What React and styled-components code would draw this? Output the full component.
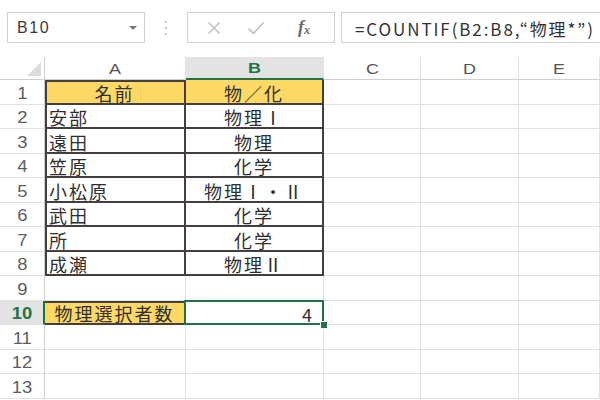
import React from "react";
import styled, { createGlobalStyle } from "styled-components";

const GREEN = "#217346";
const DARK = "#443f3c";
const GRID = "#e1e1e1";
const GOLD = "#ffd966";
const JP = `"Noto Sans CJK JP", "Noto Sans", sans-serif`;
const UI = `"Liberation Sans", Arial, sans-serif`;

const Global = createGlobalStyle`
  html, body {
    margin: 0;
    padding: 0;
    background: #fff;
    overflow: hidden;
  }
  * { box-sizing: border-box; }
`;

const Page = styled.div`
  width: 600px;
  height: 400px;
  overflow: hidden;
  background: #fff;
`;

/* ---------- formula bar ---------- */

const TopBar = styled.div`
  display: flex;
  align-items: flex-start;
  height: 57px;
  padding: 12px 0 0 7px;
`;

const NameBox = styled.div`
  display: flex;
  align-items: center;
  justify-content: space-between;
  width: 138px;
  height: 31px;
  border: 1px solid #cfcfcf;
  padding: 0 7px 0 9px;
  font-family: ${UI};
  font-size: 16px;
  letter-spacing: 1.6px;
  color: #3a3a3a;
`;

const Caret = styled.span`
  width: 0;
  height: 0;
  border-left: 4px solid transparent;
  border-right: 4px solid transparent;
  border-top: 4px solid #7a7a7a;
`;

const Dots = styled.div`
  display: flex;
  flex-direction: column;
  align-items: center;
  justify-content: center;
  gap: 4px;
  width: 42px;
  height: 31px;

  span {
    width: 2px;
    height: 2px;
    border-radius: 50%;
    background: #b5b5b5;
  }
`;

const FxBox = styled.div`
  display: flex;
  align-items: center;
  width: 148px;
  height: 31px;
  border: 1px solid #cfcfcf;
  padding: 0 0 0 17px;
`;

const IconSlot = styled.span`
  display: flex;
  align-items: center;
  justify-content: center;
  width: ${(p) => p.$w}px;
`;

const Fx = styled.span`
  font-family: "Liberation Serif", "Times New Roman", serif;
  font-style: italic;
  font-weight: bold;
  font-size: 18px;
  color: #6b6b6b;

  sub {
    font-size: 12px;
    vertical-align: -1px;
  }
`;

const FormulaBox = styled.div`
  display: flex;
  align-items: center;
  flex: 1;
  height: 31px;
  margin: 0 -10px 0 6px;
  border: 1px solid #cfcfcf;
  padding: 1px 0 0 13px;
  font-family: ${JP};
  font-size: 17px;
  letter-spacing: 1.9px;
  color: #333;
  white-space: nowrap;
  overflow: hidden;
`;

/* ---------- sheet ---------- */

const Sheet = styled.div`
  display: grid;
  grid-template-columns: 45px 141px 138px 97px 98px 81px;
  grid-template-rows: 23px repeat(13, 24.5px);
`;

const Corner = styled.div`
  display: flex;
  align-items: flex-end;
  justify-content: flex-end;
  padding: 0 3px 3px 0;
  border-right: 1px solid #cfcfcf;
  border-bottom: 1px solid #cfcfcf;
`;

const ColHead = styled.div`
  display: flex;
  align-items: center;
  justify-content: center;
  font-family: ${UI};
  font-size: 15px;
  font-weight: ${(p) => (p.$active ? "bold" : "normal")};
  color: ${(p) => (p.$active ? GREEN : "#555")};
  background: ${(p) => (p.$active ? "#e3e3e3" : "#fff")};
  border-right: 1px solid ${GRID};
  border-bottom: ${(p) => (p.$active ? `2px solid ${GREEN}` : `1px solid #cfcfcf`)};

  span {
    display: inline-block;
    transform: scaleX(1.2);
  }
`;

const RowHead = styled.div`
  display: flex;
  align-items: center;
  justify-content: center;
  padding-top: 4px;
  font-family: ${UI};
  font-size: 16px;
  font-weight: ${(p) => (p.$active ? "bold" : "normal")};
  color: ${(p) => (p.$active ? GREEN : "#5d5d5d")};
  background: ${(p) => (p.$active ? "#e3e3e3" : "#fff")};
  border-right: ${(p) => (p.$active ? `2px solid ${GREEN}` : `1px solid #cfcfcf`)};
  border-bottom: 1px solid ${GRID};

  span {
    display: inline-block;
    transform: scaleX(1.15);
  }
`;

const Cell = styled.div`
  position: relative;
  display: flex;
  align-items: center;
  justify-content: ${(p) => p.$align || "flex-start"};
  padding: 3px ${(p) => (p.$align === "flex-end" ? "9px" : "0")} 0 ${(p) => (p.$align ? "0" : "4px")};
  font-family: ${JP};
  font-size: 18px;
  letter-spacing: 2px;
  line-height: 1;
  color: #2e2e2e;
  white-space: nowrap;
  background: ${(p) => p.$bg || "#fff"};
  border-right: ${(p) => (p.$boxed ? `2px solid ${DARK}` : `1px solid ${GRID}`)};
  border-bottom: ${(p) => (p.$boxed ? `2px solid ${DARK}` : `1px solid ${GRID}`)};
  box-shadow: ${(p) =>
    p.$left || p.$top ? `inset ${p.$left ? 2 : 0}px ${p.$top ? 2 : 0}px 0 ${DARK}` : "none"};
`;

const Selection = styled.div`
  position: absolute;
  z-index: 1;
  inset: -1px -1px -1px -2px;
  border: 2px solid ${GREEN};
  pointer-events: none;
`;

const FillHandle = styled.div`
  position: absolute;
  z-index: 2;
  right: -5px;
  bottom: -5px;
  width: 8px;
  height: 8px;
  background: ${GREEN};
  border: 1px solid #fff;
`;

const rows = [
  ["名前", "物／化"],
  ["安部", "物理Ⅰ"],
  ["遠田", "物理"],
  ["笠原", "化学"],
  ["小松原", "物理Ⅰ・Ⅱ"],
  ["武田", "化学"],
  ["所", "化学"],
  ["成瀬", "物理Ⅱ"],
];

const XIcon = () => (
  <svg width="14" height="14" viewBox="0 0 14 14">
    <path d="M1.5 1.5 L12.5 12.5 M12.5 1.5 L1.5 12.5" stroke="#c4c4c4" strokeWidth="1.6" fill="none" />
  </svg>
);

const CheckIcon = () => (
  <svg width="18" height="14" viewBox="0 0 18 14">
    <path d="M1.5 7.5 L6.5 12.5 L16.5 1.5" stroke="#c4c4c4" strokeWidth="1.8" fill="none" />
  </svg>
);

const CornerMark = () => (
  <svg width="14" height="14" viewBox="0 0 14 14">
    <path d="M14 0 L14 14 L0 14 Z" fill="#dcdcdc" />
  </svg>
);

function SheetRow({ n, a, b, kind }) {
  const active = n === 10;
  return (
    <>
      <RowHead $active={active}>
        <span>{n}</span>
      </RowHead>
      {kind === "table" ? (
        <>
          <Cell $boxed $left $top={n === 1} $bg={n === 1 ? GOLD : undefined} $align={n === 1 ? "center" : undefined}>
            {a}
          </Cell>
          <Cell $boxed $bg={n === 1 ? GOLD : undefined} $align="center">
            {b}
          </Cell>
        </>
      ) : kind === "total" ? (
        <>
          <Cell $boxed $top $bg={GOLD} $align="center">
            {a}
          </Cell>
          <Cell $align="flex-end">
            {b}
            <Selection />
            <FillHandle />
          </Cell>
        </>
      ) : (
        <>
          <Cell />
          <Cell />
        </>
      )}
      <Cell />
      <Cell />
      <Cell />
    </>
  );
}

export default function App() {
  const sheetRows = [];
  for (let n = 1; n <= 13; n++) {
    if (n <= 8) sheetRows.push(<SheetRow key={n} n={n} a={rows[n - 1][0]} b={rows[n - 1][1]} kind="table" />);
    else if (n === 10) sheetRows.push(<SheetRow key={n} n={n} a="物理選択者数" b="4" kind="total" />);
    else sheetRows.push(<SheetRow key={n} n={n} />);
  }

  return (
    <Page>
      <Global />
      <TopBar>
        <NameBox>
          B10
          <Caret />
        </NameBox>
        <Dots>
          <span />
          <span />
          <span />
        </Dots>
        <FxBox>
          <IconSlot $w={17}>
            <XIcon />
          </IconSlot>
          <IconSlot $w={67}>
            <CheckIcon />
          </IconSlot>
          <IconSlot $w={30}>
            <Fx>
              f<sub>x</sub>
            </Fx>
          </IconSlot>
        </FxBox>
        <FormulaBox>=COUNTIF(B2:B8,“物理*”)</FormulaBox>
      </TopBar>
      <Sheet>
        <Corner>
          <CornerMark />
        </Corner>
        {["A", "B", "C", "D", "E"].map((c) => (
          <ColHead key={c} $active={c === "B"}>
            <span>{c}</span>
          </ColHead>
        ))}
        {sheetRows}
      </Sheet>
    </Page>
  );
}
